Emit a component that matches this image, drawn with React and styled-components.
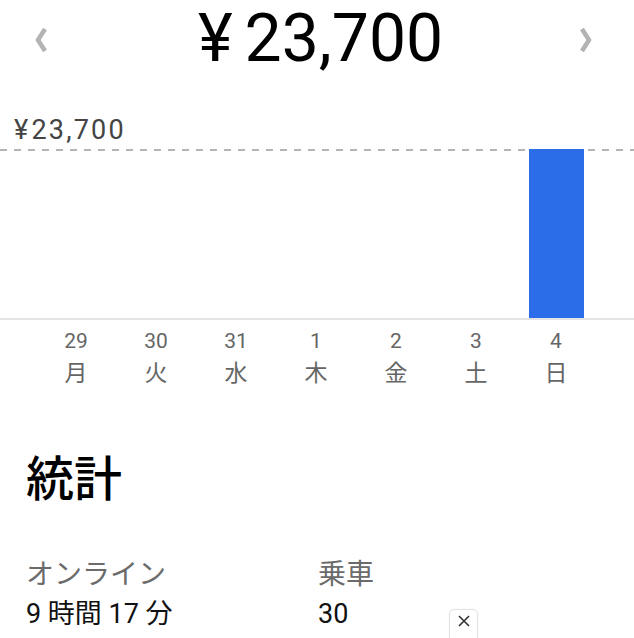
import * as React from 'react'
import styled, { createGlobalStyle } from 'styled-components'

const GlobalStyle = createGlobalStyle`
  html, body {
    margin: 0;
    padding: 0;
    background: #fff;
  }
  body {
    font-family: Roboto, "Noto Sans CJK JP", sans-serif;
    color: #111;
    overflow: hidden;
  }
`

const Page = styled.div`
  width: 634px;
  height: 638px;
  overflow: hidden;
  position: relative;
`

const Header = styled.div`
  display: flex;
  align-items: center;
  justify-content: space-between;
  padding: 0 42px 0 35px;
`

const Chevron = styled.svg`
  width: 12px;
  height: 26px;
  margin-top: 2px;
  display: block;
`

const Amount = styled.div`
  font-family: Roboto, sans-serif;
  font-size: 66px;
  line-height: 78px;
  color: #000;
  margin-left: 14px;
`

const Yen = styled.span`
  margin-right: 12px;
`

const Chart = styled.div`
  margin-top: 37px;
`

const MaxLabel = styled.div`
  font-family: Roboto, sans-serif;
  font-size: 27px;
  line-height: 30px;
  letter-spacing: 2.2px;
  color: #444;
  padding-left: 14px;
  margin-bottom: 4px;
`

const Yen2 = styled.span`
  margin-right: 1px;
`

const DashLine = styled.div`
  height: 2px;
  background: repeating-linear-gradient(to right, #b4b4b4 0 7px, transparent 7px 14px);
`

const Columns = styled.div`
  display: grid;
  grid-template-columns: repeat(7, 80px);
  padding-left: 36px;
`

const Bars = styled(Columns)`
  height: 169px;
  margin-top: -2px;
  align-items: end;
  border-bottom: 2px solid #e4e4e4;
`

const Bar = styled.div`
  width: 55px;
  justify-self: center;
  background: #2b6ce9;
`

const Tick = styled.div`
  display: flex;
  flex-direction: column;
  align-items: center;
  padding-top: 9px;
  color: #666;
`

const TickNum = styled.div`
  font-family: Roboto, sans-serif;
  font-size: 21px;
  line-height: 24px;
`

const TickDay = styled.div`
  font-family: "Noto Sans CJK JP", sans-serif;
  font-size: 23px;
  line-height: 28px;
  margin-top: 4px;
`

const Stats = styled.section`
  padding-left: 26px;
  margin-top: 62px;
`

const Title = styled.h2`
  margin: 0;
  font-family: "Noto Sans CJK JP", sans-serif;
  font-weight: 500;
  font-size: 48px;
  line-height: 56px;
  color: #000;
`

const StatGrid = styled.div`
  display: grid;
  grid-template-columns: 292px 1fr;
  margin-top: 52px;
  row-gap: 8px;
`

const StatLabel = styled.div`
  font-family: "Noto Sans CJK JP", sans-serif;
  font-size: 28px;
  line-height: 34px;
  color: #6b6b6b;
`

const StatValue = styled.div`
  font-family: Roboto, "Noto Sans CJK JP", sans-serif;
  font-size: 27px;
  line-height: 34px;
  color: #111;
`

const CloseButton = styled.button`
  position: absolute;
  left: 449px;
  top: 609px;
  width: 29px;
  height: 40px;
  padding: 4px 0 0;
  border: 1px solid #e2e2e2;
  border-radius: 5px;
  background: #fff;
  display: flex;
  justify-content: center;
  align-items: flex-start;
  box-shadow: 0 0 2px rgba(0, 0, 0, 0.06);
`

const days = [
  { d: '29', w: '月', v: 0 },
  { d: '30', w: '火', v: 0 },
  { d: '31', w: '水', v: 0 },
  { d: '1', w: '木', v: 0 },
  { d: '2', w: '金', v: 0 },
  { d: '3', w: '土', v: 0 },
  { d: '4', w: '日', v: 23700 },
]

const max = 23700

export default function App() {
  return (
    <Page>
      <GlobalStyle />
      <Header>
        <Chevron viewBox="0 0 12 26">
          <polyline points="10,2 3,13 10,24" fill="none" stroke="#b3b3b3" strokeWidth="4.5" />
        </Chevron>
        <Amount>
          <Yen>¥</Yen>23,700
        </Amount>
        <Chevron viewBox="0 0 12 26">
          <polyline points="2,2 9,13 2,24" fill="none" stroke="#b3b3b3" strokeWidth="4.5" />
        </Chevron>
      </Header>

      <Chart>
        <MaxLabel>
          <Yen2>¥</Yen2>23,700
        </MaxLabel>
        <DashLine />
        <Bars>
          {days.map((day) => (
            <Bar key={day.d} style={{ height: `${(day.v / max) * 100}%` }} />
          ))}
        </Bars>
        <Columns>
          {days.map((day) => (
            <Tick key={day.d}>
              <TickNum>{day.d}</TickNum>
              <TickDay>{day.w}</TickDay>
            </Tick>
          ))}
        </Columns>
      </Chart>

      <Stats>
        <Title>統計</Title>
        <StatGrid>
          <StatLabel>オンライン</StatLabel>
          <StatLabel>乗車</StatLabel>
          <StatValue>9 時間 17 分</StatValue>
          <StatValue>30</StatValue>
        </StatGrid>
      </Stats>

      <CloseButton aria-label="閉じる">
        <svg width="14" height="14" viewBox="0 0 14 14">
          <path d="M2 2 L12 12 M12 2 L2 12" stroke="#333" strokeWidth="1.6" />
        </svg>
      </CloseButton>
    </Page>
  )
}
